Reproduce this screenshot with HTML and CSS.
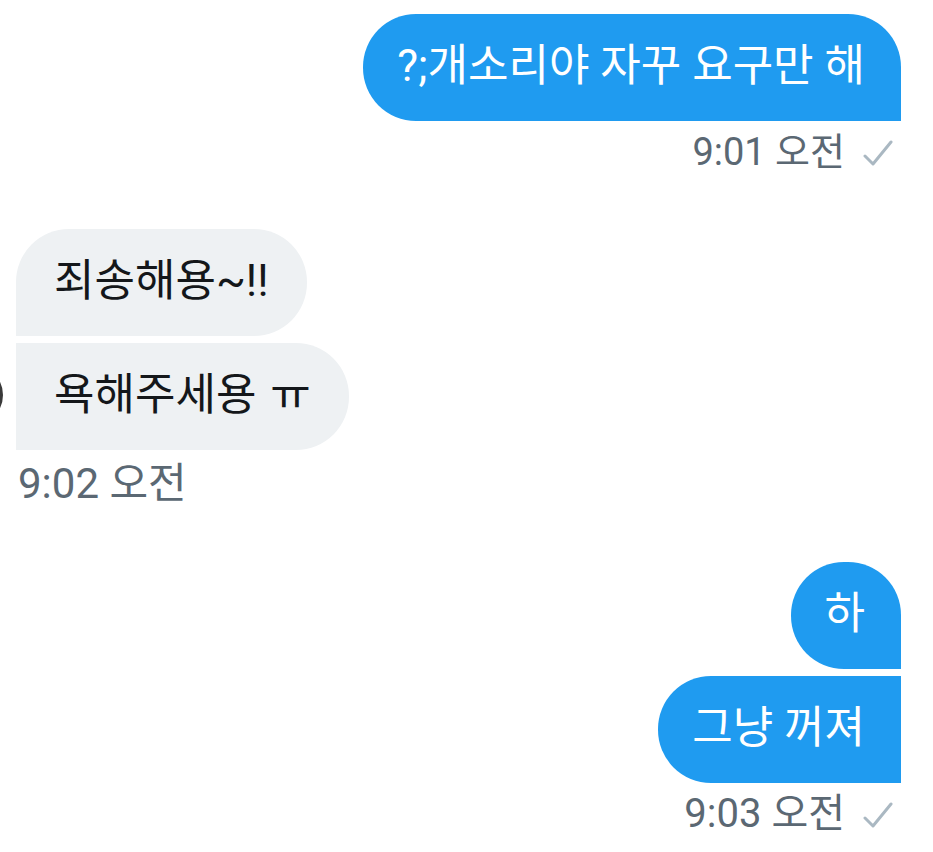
FILE: index.html
```html
<!DOCTYPE html>
<html lang="ko">
<head>
    <meta charset="UTF-8">
    <meta name="viewport" content="width=device-width, initial-scale=1.0">
    <title>Messages</title>
    <link rel="stylesheet" href="styles.css">
</head>
<body>

    <div class="thread">

        <div class="group sent">
            <div class="bubble">?;개소리야 자꾸 요구만 해</div>
            <div class="meta">
                <span>9:01 오전</span>
                <svg class="check" viewBox="0 0 30 28"><polyline points="2,17 10,25 28,3"/></svg>
            </div>
        </div>

        <div class="group received">
            <div class="avatar"></div>
            <div class="stack">
                <div class="bubble">죄송해용~!!</div>
                <div class="bubble">욕해주세용 <span class="cry">ㅠ</span></div>
                <div class="meta">
                    <span>9:02 오전</span>
                </div>
            </div>
        </div>

        <div class="group sent last">
            <div class="bubble">하</div>
            <div class="bubble">그냥 꺼져</div>
            <div class="meta">
                <span>9:03 오전</span>
                <svg class="check" viewBox="0 0 30 28"><polyline points="2,17 10,25 28,3"/></svg>
            </div>
        </div>

    </div>

</body>
</html>
```

FILE: styles.css
```css
body {
    margin: 0;
    background: #fff;
    font-family: Roboto, "Noto Sans CJK KR", sans-serif;
}
.thread {
    display: flex;
    flex-direction: column;
    padding: 14px 32px 0 16px;
}
.group {
    display: flex;
    flex-direction: column;
    gap: 7px;
    margin-bottom: 61px;
}
.sent {
    align-items: flex-end;
}
.received {
    flex-direction: row;
    align-items: center;
    position: relative;
    margin-bottom: 63px;
}
.stack {
    display: flex;
    flex-direction: column;
    align-items: flex-start;
    gap: 7px;
}
.bubble {
    height: 107px;
    box-sizing: border-box;
    padding: 0 36px 0 34px;
    font-size: 44px;
    line-height: 104px;
    white-space: nowrap;
    border-radius: 53px;
}
.sent .bubble {
    background: #1f9bf0;
    color: #fff;
    border-bottom-right-radius: 0;
}
.sent .bubble + .bubble {
    border-top-right-radius: 0;
}
.received .bubble {
    background: #eef1f3;
    color: #14171a;
    padding: 0 38px;
    border-bottom-left-radius: 0;
}
.received .bubble + .bubble {
    border-top-left-radius: 0;
}
.cry {
    margin-left: 3px;
}
.meta {
    display: flex;
    align-items: center;
    gap: 18px;
    height: 40px;
    font-size: 38px;
    color: #5b6873;
}
.received .meta {
    padding-left: 2px;
    margin-top: 2px;
    font-size: 42px;
}
.last .meta {
    font-size: 40px;
}
.sent .meta {
    padding-right: 8px;
}
.check {
    width: 30px;
    height: 28px;
    margin-top: 10px;
    fill: none;
    stroke: #aab8c2;
    stroke-width: 3;
    stroke-linecap: round;
    stroke-linejoin: round;
}
/* avatar sits mostly off the left edge, only its rim shows */
.avatar {
    position: absolute;
    left: -73px;
    top: 136px;
    width: 60px;
    height: 60px;
    border-radius: 50%;
    border: 3px solid #3a3a3a;
    box-sizing: border-box;
}
```
